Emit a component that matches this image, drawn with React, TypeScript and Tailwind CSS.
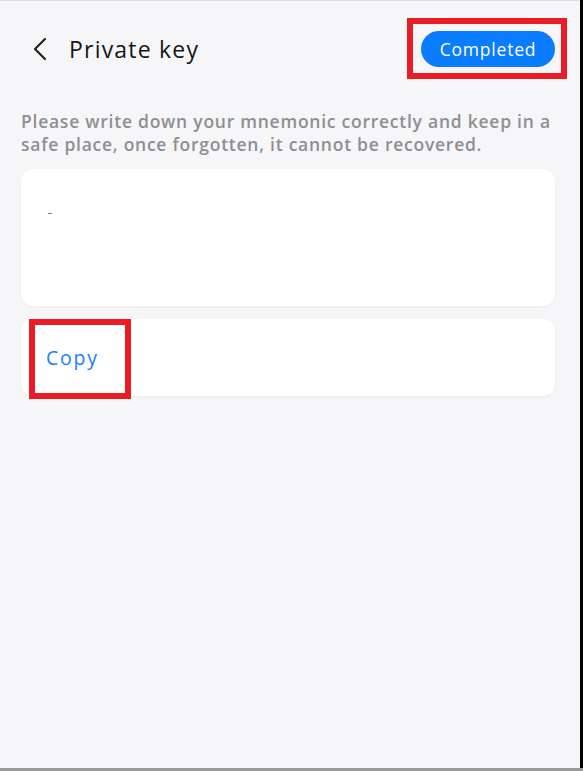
import React from 'react';

export default function App() {
  return (
    <div className="relative h-[771px] w-[583px] overflow-hidden bg-black font-['Open_Sans',sans-serif]">
      <div className="h-[768px] w-[580px] border-t border-[#dedede] bg-[#f6f6f8]">
        {/* Header */}
        <div className="flex items-center justify-between pl-[32px] pr-[25px] pt-[30px]">
          <div className="flex items-center">
            <svg width="16" height="24" viewBox="0 0 16 24" fill="none" className="text-[#222]">
              <path d="M13 2 L3 12 L13 22" stroke="currentColor" strokeWidth="2.2" strokeLinecap="round" strokeLinejoin="round" />
            </svg>
            <h1 className="ml-[21px] text-[23px] leading-none tracking-[1.2px] text-[#161616]">Private key</h1>
          </div>
          <button className="h-[36px] w-[134px] rounded-full bg-[#0a7cff] text-[17.5px] font-medium tracking-[0.8px] text-white">
            Completed
          </button>
        </div>

        {/* Notice */}
        <p className="mt-[43px] pl-[21px] pr-[25px] text-[17.5px] font-semibold leading-[23px] tracking-[0.75px] text-[#8e8e93]">
          Please write down your mnemonic correctly and keep in a safe place, once forgotten, it cannot be recovered.
        </p>

        {/* Key box */}
        <div className="ml-[21px] mr-[25px] mt-[13px] h-[137px] rounded-xl bg-white pl-[27px] pt-[44px] shadow-[0_1px_3px_rgba(0,0,0,0.05)]">
          <span className="block h-px w-[4px] bg-[#8a7a6a]" />
        </div>

        {/* Copy */}
        <div className="ml-[21px] mr-[25px] mt-[13px] flex h-[77px] items-center rounded-xl bg-white pl-[25px] shadow-[0_1px_3px_rgba(0,0,0,0.05)]">
          <span className="text-[19.5px] tracking-[1.8px] text-[#1a7eff]">Copy</span>
        </div>
      </div>
      <div className="h-[3px] w-[583px] bg-[#9a9a9a]" />

      {/* annotation boxes */}
      <div className="pointer-events-none absolute left-[407px] top-[18px] h-[61px] w-[160px] border-[6px] border-[#ec1c24]" />
      <div className="pointer-events-none absolute left-[29px] top-[319px] h-[80px] w-[102px] border-[6px] border-[#ec1c24]" />
    </div>
  );
}
